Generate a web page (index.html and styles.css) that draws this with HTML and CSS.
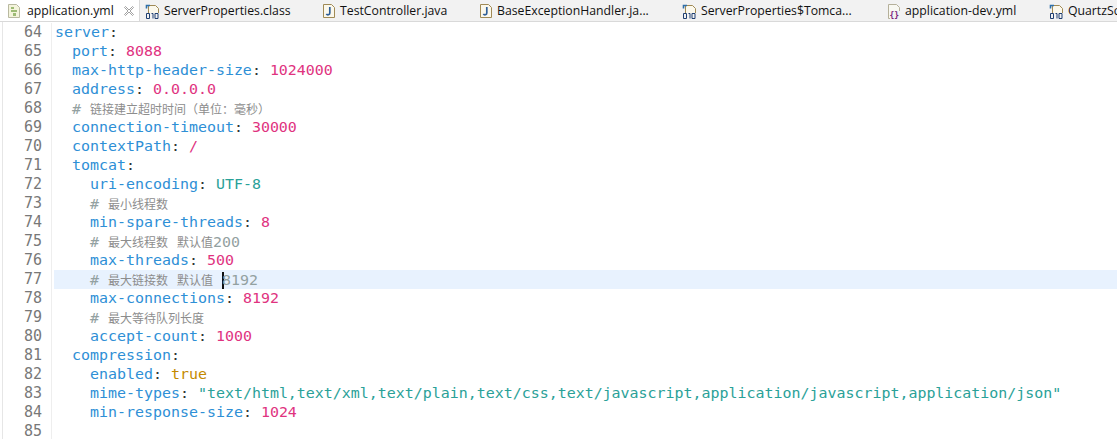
FILE: index.html
```html
<!DOCTYPE html>
<html lang="en">
<head>
<meta charset="utf-8">
<title>application.yml</title>
<link rel="stylesheet" href="styles.css">
</head>
<body>
<div class="editor">
  <div class="tabs">
    <div class="tab active t1">
      <svg class="ico" viewBox="0 0 16 16"><path d="M2.500 1.500h8l3 3v10h-11z" fill="#f4f4dc" stroke="#b9b9a0"/><path d="M5 4h3v2H5zM5 7h6v2H5zM7 10h3v3H7z" fill="#9dbb74"/></svg>
      <span>application.yml</span>
      <svg class="close" viewBox="0 0 12 12"><path d="M1.500 2.500l1-1L6 5l3.500-3.500 1 1L7 6l3.500 3.500-1 1L6 7l-3.500 3.500-1-1L5 6z" fill="#fff" stroke="#8a8a8a" stroke-width=".8"/></svg>
    </div>
    <div class="tab t2">
      <svg class="ico" viewBox="0 0 16 16"><use href="#cls"/></svg><span>ServerProperties.class</span>
    </div>
    <div class="tab t3">
      <svg class="ico" viewBox="0 0 16 16"><use href="#jv"/></svg><span>TestController.java</span>
    </div>
    <div class="tab t4">
      <svg class="ico" viewBox="0 0 16 16"><use href="#jv"/></svg><span>BaseExceptionHandler.ja...</span>
    </div>
    <div class="tab t5">
      <svg class="ico" viewBox="0 0 16 16"><use href="#cls"/></svg><span>ServerProperties$Tomca...</span>
    </div>
    <div class="tab t6">
      <svg class="ico" viewBox="0 0 16 16"><path d="M2.500 1.500h8l3 3v11h-11z" fill="#f8f8f2" stroke="#b5b09a"/><rect x="4" y="8" width="12" height="8" fill="#f2f2f2"/><text x="3.500" y="15" class="brace">{}</text></svg><span>application-dev.yml</span>
    </div>
    <div class="tab t7">
      <svg class="ico" viewBox="0 0 16 16"><use href="#cls"/></svg><span>QuartzSc</span>
    </div>
  </div>
  <svg class="defs" width="0" height="0" aria-hidden="true">
    <defs>
      <g id="cls"><path d="M3.500 2.500h7l3 3v10h-10z" fill="#fbf8ec" stroke="#a08a55"/><path d="M1.500 5.500V2.500h3.500" fill="none" stroke="#2f6fa8" stroke-width="1.600"/><rect x="1" y="10" width="15" height="6" fill="#f2f2f2"/><path d="M1.500 10.500h3v5h-3zM6.500 10.500h1.500v5M10 10.500h3v5h-3z" fill="none" stroke="#1f3f70"/></g>
      <g id="jv"><path d="M2.500 1.500h8l3 3v10h-11z" fill="#fbf8ec" stroke="#a08a55"/><path d="M8.800 4v6c0 2-2.500 2.300-3.500 1" fill="none" stroke="#2f5f98" stroke-width="1.700"/></g>
    </defs>
  </svg>
  <div class="body">
    <div class="gutter">
      <div>64</div><div>65</div><div>66</div><div>67</div><div>68</div><div>69</div><div>70</div><div>71</div><div>72</div><div>73</div><div>74</div><div>75</div><div>76</div><div>77</div><div>78</div><div>79</div><div>80</div><div>81</div><div>82</div><div>83</div><div>84</div><div>85</div>
    </div>
    <div class="code">
      <div class="ln"><span class="k">server</span>:</div>
      <div class="ln in1"><span class="k">port</span>: <span class="n">8088</span></div>
      <div class="ln in1"><span class="k">max-http-header-size</span>: <span class="n">1024000</span></div>
      <div class="ln in1"><span class="k">address</span>: <span class="n">0.0.0.0</span></div>
      <div class="ln in1"><span class="c"># <span class="cjk">链接建立超时时间（单位：毫秒）</span></span></div>
      <div class="ln in1"><span class="k">connection-timeout</span>: <span class="n">30000</span></div>
      <div class="ln in1"><span class="k">contextPath</span>: <span class="n">/</span></div>
      <div class="ln in1"><span class="k">tomcat</span>:</div>
      <div class="ln in2"><span class="k">uri-encoding</span>: <span class="s">UTF-8</span></div>
      <div class="ln in2"><span class="c"># <span class="cjk">最小线程数</span></span></div>
      <div class="ln in2"><span class="k">min-spare-threads</span>: <span class="n">8</span></div>
      <div class="ln in2"><span class="c"># <span class="cjk">最大线程数</span> <span class="cjk">默认值</span>200</span></div>
      <div class="ln in2"><span class="k">max-threads</span>: <span class="n">500</span></div>
      <div class="ln in2 cur"><span class="c"># <span class="cjk">最大链接数</span> <span class="cjk">默认值</span> <span class="caret"></span>8192</span></div>
      <div class="ln in2"><span class="k">max-connections</span>: <span class="n">8192</span></div>
      <div class="ln in2"><span class="c"># <span class="cjk">最大等待队列长度</span></span></div>
      <div class="ln in2"><span class="k">accept-count</span>: <span class="n">1000</span></div>
      <div class="ln in1"><span class="k">compression</span>:</div>
      <div class="ln in2"><span class="k">enabled</span>: <span class="b">true</span></div>
      <div class="ln in2"><span class="k">mime-types</span>: <span class="s">"text/html,text/xml,text/plain,text/css,text/javascript,application/javascript,application/json"</span></div>
      <div class="ln in2"><span class="k">min-response-size</span>: <span class="n">1024</span></div>
      <div class="ln"></div>
    </div>
  </div>
</div>
</body>
</html>
```
FILE: styles.css
```css
html, body { margin: 0; padding: 0; background: #fff; }
.editor { width: 1117px; height: 439px; overflow: hidden; }
.tabs { display: flex; height: 21px; background: #f2f2f2; border-bottom: 1px solid #d9d9d9; font: 12.250px "Open Sans", "Noto Sans", sans-serif; color: #111; overflow: hidden; }
.tab { display: flex; align-items: center; flex: none; gap: 3px; padding-left: 5px; box-sizing: border-box; height: 21px; white-space: nowrap; }
.tab.active { background: #fff; border-right: 1px solid #d9d9d9; gap: 5px; padding-left: 6px; }
.t1 { width: 140px; }
.t2 { width: 176px; }
.t3 { width: 157px; }
.t4 { width: 204px; }
.t5 { width: 204px; }
.t6 { width: 163px; }
.t7 { width: 70px; }
.ico { width: 16px; height: 16px; flex: none; }
.close { width: 12px; height: 12px; flex: none; margin-left: 4px; }
.brace { font: bold 8px "DejaVu Sans Mono", monospace; fill: #7b1f7b; }
.defs { position: absolute; }
.body { display: flex; margin-left: 2px; padding-top: 1px; border-left: 1px solid #e6e6e6; }
.gutter { width: 39px; padding-right: 9px; border-right: 1px solid #eeeeee; text-align: right; color: #787878; font: 15px/19px "DejaVu Sans Mono", monospace; }
.code { flex: 1; margin-left: 2px; font: 14.950px/19px "DejaVu Sans Mono", monospace; color: #333; min-width: 0; }
.ln { height: 19px; padding-left: 1px; white-space: pre; }
.in1 { padding-left: 18px; }
.in2 { padding-left: 36px; }
.cur { background: #e8f2fe; }
.k { color: #2e8fd6; }
.n { color: #e0337f; }
.s { color: #2aa198; }
.b { color: #c48a00; }
.c { color: #93a1a1; }
.cjk { font-family: "Noto Sans CJK SC", sans-serif; font-size: 12px; color: #8d8d8d; }
.caret { display: inline-block; width: 2px; height: 17px; background: #111; vertical-align: -4px; margin-right: -2px; }
```
